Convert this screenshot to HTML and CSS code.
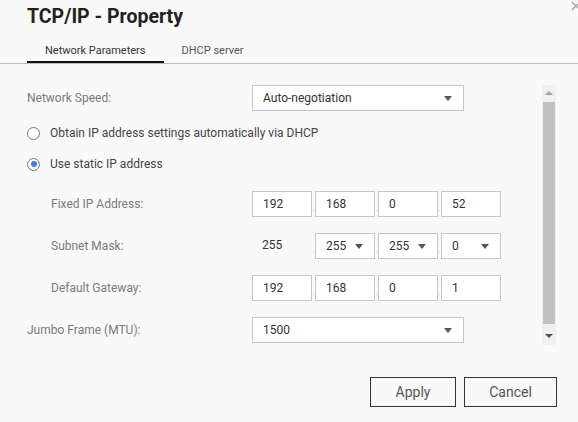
FILE: index.html
```html
<!DOCTYPE html>
<html>
<head>
    <meta charset="UTF-8">
    <title>TCP/IP - Property</title>
    <link rel="stylesheet" href="styles.css">
</head>
<body>
    <div class="dialog">
        <h1 class="title">TCP/IP - Property</h1>
        <svg class="close" width="10" height="10" viewBox="0 0 10 10">
            <path d="M1 1 L9 9 M9 1 L1 9" stroke="#999" stroke-width="1.2" fill="none"/>
        </svg>

        <div class="tabs">
            <span class="tab active">Network Parameters</span>
            <span class="tab">DHCP server</span>
        </div>

        <div class="content">
            <div class="form">
                <div class="row speed-row">
                    <span class="label">Network Speed:</span>
                    <div class="select wide">Auto-negotiation<span class="arrow"></span></div>
                </div>

                <div class="row radio-row first">
                    <span class="radio"></span>
                    <span class="radio-text">Obtain IP address settings automatically via DHCP</span>
                </div>
                <div class="row radio-row">
                    <span class="radio checked"></span>
                    <span class="radio-text">Use static IP address</span>
                </div>

                <div class="row ip-row">
                    <span class="label sub">Fixed IP Address:</span>
                    <div class="ip">
                        <div class="box">192</div><span class="dot">.</span>
                        <div class="box">168</div><span class="dot">.</span>
                        <div class="box">0</div><span class="dot">.</span>
                        <div class="box">52</div>
                    </div>
                </div>

                <div class="row ip-row">
                    <span class="label sub">Subnet Mask:</span>
                    <div class="ip">
                        <div class="plain">255</div><span class="dot">.</span>
                        <div class="select small">255<span class="arrow"></span></div><span class="dot">.</span>
                        <div class="select small">255<span class="arrow"></span></div><span class="dot">.</span>
                        <div class="select small">0<span class="arrow"></span></div>
                    </div>
                </div>

                <div class="row ip-row">
                    <span class="label sub">Default Gateway:</span>
                    <div class="ip">
                        <div class="box">192</div><span class="dot">.</span>
                        <div class="box">168</div><span class="dot">.</span>
                        <div class="box">0</div><span class="dot">.</span>
                        <div class="box">1</div>
                    </div>
                </div>

                <div class="row ip-row">
                    <span class="label">Jumbo Frame (MTU):</span>
                    <div class="select wide">1500<span class="arrow"></span></div>
                </div>
            </div>

            <div class="scrollbar">
                <span class="sb-up"></span>
                <div class="sb-thumb"></div>
                <span class="sb-down"></span>
            </div>
        </div>

        <div class="footer">
            <button class="btn">Apply</button>
            <button class="btn">Cancel</button>
        </div>
    </div>
</body>
</html>
```

FILE: styles.css
```css
body {
    margin: 0;
    padding: 0;
    background-color: #f9f9f9;
    font-family: Roboto, "Liberation Sans", sans-serif;
    color: #333;
}
.dialog {
    position: relative;
    width: 578px;
    height: 422px;
    overflow: hidden;
}
.title {
    margin: 0;
    padding: 4px 0 0 27px;
    height: 28px;
    font-size: 19.5px;
    font-weight: bold;
    color: #222;
    line-height: 26px;
}
.close {
    position: absolute;
    top: 1px;
    right: -3px;
}

/* tabs */
.tabs {
    display: flex;
    padding-left: 27px;
    margin-top: 11px;
    border-bottom: 1px solid #bdbdbd;
}
.tab {
    padding: 0 18px;
    height: 20px;
    line-height: 15px;
    font-size: 11px;
    color: #555;
}
.tab.active {
    color: #333;
    box-shadow: inset 0 -2px 0 #111;
}

/* form area */
.content {
    display: flex;
    height: 290px;
}
.form {
    width: 515px;
    padding-left: 27px;
    padding-top: 21px;
}
.row {
    display: flex;
    align-items: center;
    height: 26px;
    font-size: 12px;
}
.label {
    width: 225px;
    color: #7a7a7a;
}
.label.sub {
    width: 201px;
    padding-left: 24px;
}
.radio-row.first {
    margin-top: 9px;
}
.radio-row {
    margin-top: 5px;
}
.radio {
    width: 11px;
    height: 11px;
    border: 1px solid #777;
    border-radius: 50%;
    margin-right: 10px;
    display: flex;
    align-items: center;
    justify-content: center;
    background: #fff;
}
.radio.checked::after {
    content: "";
    width: 6px;
    height: 6px;
    border-radius: 50%;
    background: #3d7fe8;
}
.radio-text {
    color: #444;
}
.ip-row {
    margin-top: 16px;
}
.radio-row + .ip-row {
    margin-top: 14px;
}
.ip {
    display: flex;
    height: 26px;
}
.box, .select, .plain {
    box-sizing: border-box;
    height: 26px;
    line-height: 24px;
    padding-left: 10px;
    color: #333;
}
.box, .select {
    border: 1px solid #c6c6c6;
    background: #fff;
}
.box, .plain, .select.small {
    width: 60px;
}
.select {
    position: relative;
}
.select.wide {
    width: 212px;
}
.arrow {
    position: absolute;
    right: 11px;
    top: 10px;
    width: 0;
    height: 0;
    border-left: 4px solid transparent;
    border-right: 4px solid transparent;
    border-top: 5px solid #555;
}
.dot {
    width: 3px;
    font-size: 7px;
    line-height: 7px;
    align-self: flex-end;
    color: #999;
    margin-bottom: 4px;
    text-align: center;
}

/* scrollbar */
.scrollbar {
    margin-top: 21px;
    width: 14px;
    height: 260px;
    background: #f0f0f0;
    display: flex;
    flex-direction: column;
    align-items: center;
}
.sb-up, .sb-down {
    width: 0;
    height: 0;
    border-left: 4px solid transparent;
    border-right: 4px solid transparent;
}
.sb-up {
    margin-top: 6px;
    border-bottom: 4px solid #a3a3a3;
}
.sb-down {
    margin-top: 10px;
    border-top: 4px solid #505050;
}
.sb-thumb {
    margin-top: 7px;
    width: 12px;
    height: 222px;
    background: #c1c1c1;
}

/* footer */
.footer {
    display: flex;
    justify-content: flex-end;
    gap: 8px;
    padding-right: 21px;
    margin-top: 23px;
}
.btn {
    height: 30px;
    border: 1px solid #333;
    background: transparent;
    font-family: Roboto, "Liberation Sans", sans-serif;
    font-size: 14px;
    color: #555;
    padding: 0;
    width: 86px;
}
.btn + .btn {
    width: 93px;
}
```
